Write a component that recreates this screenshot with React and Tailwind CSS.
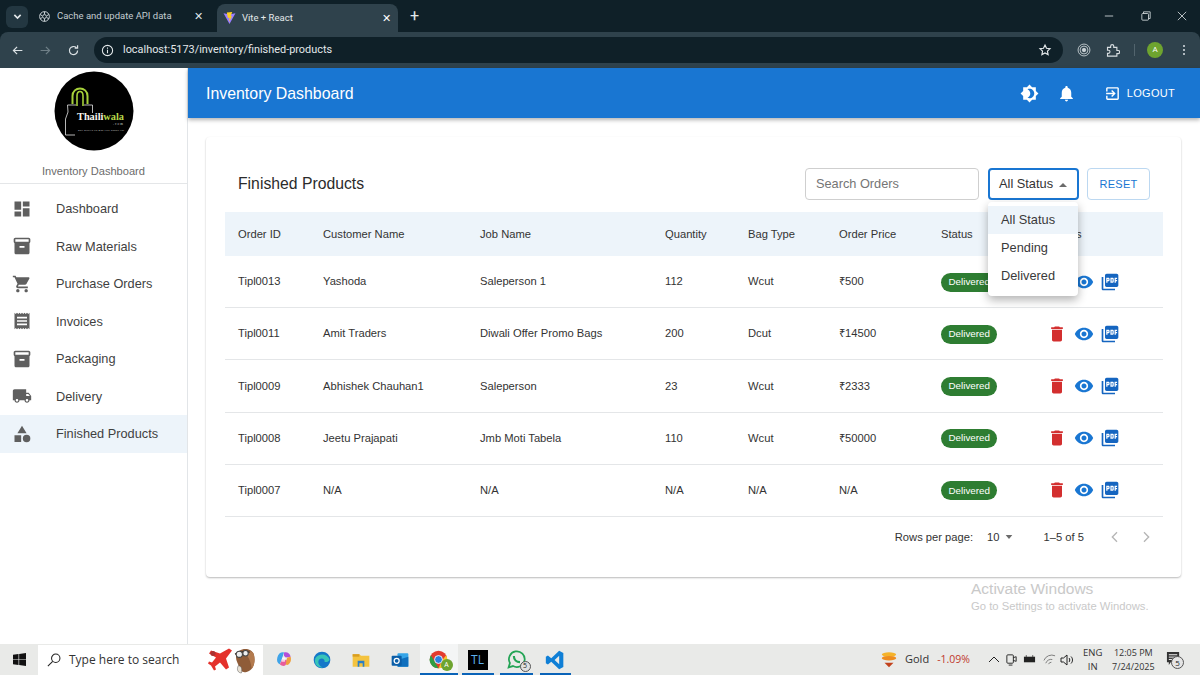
const P = ({ d, className, vb = "0 0 24 24" }) => (
  <svg viewBox={vb} className={className} fill="currentColor"><path d={d} /></svg>
);
const I = {
  dash: "M3 13h8V3H3v10zm0 8h8v-6H3v6zm10 0h8V11h-8v10zm0-18v6h8V3h-8z",
  box: "M20 2H4c-1 0-2 .9-2 2v3.01c0 .72.43 1.34 1 1.69V20c0 1.1 1.1 2 2 2h14c.9 0 2-.9 2-2V8.7c.57-.35 1-.97 1-1.69V4c0-1.1-1-2-2-2zm-5 12H9v-2h6v2zm5-7H4V4l16-.02V7z",
  cart: "M7 18c-1.1 0-1.99.9-1.99 2S5.9 22 7 22s2-.9 2-2-.9-2-2-2zM1 2v2h2l3.6 7.59-1.35 2.45c-.16.28-.25.61-.25.96 0 1.1.9 2 2 2h12v-2H7.42c-.14 0-.25-.11-.25-.25l.03-.12.9-1.63h7.45c.75 0 1.41-.41 1.75-1.03l3.58-6.49c.08-.14.12-.31.12-.48 0-.55-.45-1-1-1H5.21l-.94-2H1zm16 16c-1.1 0-1.99.9-1.99 2s.89 2 1.99 2 2-.9 2-2-.9-2-2-2z",
  receipt: "M18 17H6v-2h12v2zm0-4H6v-2h12v2zm0-4H6V7h12v2zM3 22l1.5-1.5L6 22l1.5-1.5L9 22l1.5-1.5L12 22l1.5-1.5L15 22l1.5-1.5L18 22l1.5-1.5L21 22V2l-1.5 1.5L18 2l-1.5 1.5L15 2l-1.5 1.5L12 2l-1.5 1.5L9 2 7.5 3.5 6 2 4.5 3.5 3 2v20z",
  truck: "M20 8h-3V4H3c-1.1 0-2 .9-2 2v11h2c0 1.66 1.34 3 3 3s3-1.34 3-3h6c0 1.66 1.34 3 3 3s3-1.34 3-3h2v-5l-3-4zM6 18.5c-.83 0-1.5-.67-1.5-1.5s.67-1.5 1.5-1.5 1.5.67 1.5 1.5-.67 1.5-1.5 1.5zm13.5-9 1.96 2.5H17V9.5h2.5zm-1.5 9c-.83 0-1.5-.67-1.5-1.5s.67-1.5 1.5-1.5 1.5.67 1.5 1.5-.67 1.5-1.5 1.5z",
  cat: "M12 2l-5.5 9h11zM17.5 13a4.5 4.5 0 1 0 0 9 4.5 4.5 0 0 0 0-9zM3 13.5h8v8H3z",
  bright: "M20 8.69V4h-4.69L12 .69 8.69 4H4v4.69L.69 12 4 15.31V20h4.69L12 23.31 15.31 20H20v-4.69L23.31 12 20 8.69zM12 18c-.89 0-1.74-.2-2.5-.55C11.56 16.5 13 14.42 13 12s-1.44-4.5-3.5-5.45C10.26 6.2 11.11 6 12 6c3.31 0 6 2.69 6 6s-2.69 6-6 6z",
  bell: "M12 22c1.1 0 2-.9 2-2h-4c0 1.1.89 2 2 2zm6-6v-5c0-3.07-1.64-5.64-4.5-6.32V4c0-.83-.67-1.5-1.5-1.5s-1.5.67-1.5 1.5v.68C7.63 5.36 6 7.92 6 11v5l-2 2v1h16v-1l-2-2z",
  exit: "M10.09 15.59 11.5 17l5-5-5-5-1.41 1.41L12.67 11H3v2h9.67l-2.58 2.59zM19 3H5c-1.11 0-2 .9-2 2v4h2V5h14v14H5v-4H3v4c0 1.1.89 2 2 2h14c1.1 0 2-.9 2-2V5c0-1.1-.9-2-2-2z",
  del: "M6 19c0 1.1.9 2 2 2h8c1.1 0 2-.9 2-2V7H6v12zM19 4h-3.5l-1-1h-5l-1 1H5v2h14V4z",
  eye: "M12 4.5C7 4.5 2.73 7.61 1 12c1.73 4.39 6 7.5 11 7.5s9.27-3.11 11-7.5c-1.73-4.39-6-7.5-11-7.5zM12 17c-2.76 0-5-2.24-5-5s2.24-5 5-5 5 2.24 5 5-2.24 5-5 5zm0-8c-1.66 0-3 1.34-3 3s1.34 3 3 3 3-1.34 3-3-1.34-3-3-3z",
  pdf: "M20 2H8c-1.1 0-2 .9-2 2v12c0 1.1.9 2 2 2h12c1.1 0 2-.9 2-2V4c0-1.1-.9-2-2-2zm-8.5 7.5c0 .83-.67 1.5-1.5 1.5H9v2H7.5V7H10c.83 0 1.5.67 1.5 1.5v1zm5 2c0 .83-.67 1.5-1.5 1.5h-2.5V7H15c.83 0 1.5.67 1.5 1.5v3zm4-3H19v1h1.5V11H19v2h-1.5V7h3v1.5zM9 9.5h1v-1H9v1zM4 6H2v14c0 1.1.9 2 2 2h14v-2H4V6zm10 5.5h1v-3h-1v3z",
};
const nav = [["dash","Dashboard"],["box","Raw Materials"],["cart","Purchase Orders"],["receipt","Invoices"],["box","Packaging"],["truck","Delivery"],["cat","Finished Products"]];
const rows = [
  ["Tipl0013","Yashoda","Saleperson 1","112","Wcut","₹500"],
  ["Tipl0011","Amit Traders","Diwali Offer Promo Bags","200","Dcut","₹14500"],
  ["Tipl0009","Abhishek Chauhan1","Saleperson","23","Wcut","₹2333"],
  ["Tipl0008","Jeetu Prajapati","Jmb Moti Tabela","110","Wcut","₹50000"],
  ["Tipl0007","N/A","N/A","N/A","N/A","N/A"],
];
const cols = "grid grid-cols-[85px_157px_185px_83px_91px_102px_99px_1fr] items-center pl-[13px]";

function Chrome() {
  return (
    <div className="h-[68px] bg-[#0f2028] text-[#d6dde0] flex flex-col shrink-0" style={{ fontFamily: "Roboto, sans-serif" }}>
      <div className="h-[32px] flex items-center relative pl-[5px]">
        <div className="w-[22px] h-[22px] mt-[1px] ml-[1px] rounded-md bg-[#233741] flex items-center justify-center">
          <svg viewBox="0 0 10 10" className="w-[9px] h-[9px]" fill="none" stroke="#e3e8ea" strokeWidth="1.8"><path d="M1.5 3.2 5 6.8l3.5-3.6" /></svg>
        </div>
        <div className="w-[189px] flex items-center pl-[10px] text-[9.5px] text-[#c3ccd0] mt-[1px]">
          <svg viewBox="0 0 24 24" className="w-[13px] h-[13px] mr-[6px]" fill="none" stroke="#c9d1d5" strokeWidth="1.8"><circle cx="12" cy="12" r="9" /><circle cx="12" cy="12" r="3.5" /><path d="M12 3v5M4 8l4 3M4 16l4-2M12 21v-5M20 16l-4-2M20 8l-4 3" /></svg>
          <span className="flex-1">Cache and update API data</span>
          <span className="text-[11px] mr-[14px] text-[#dfe5e8] leading-none">✕</span>
        </div>
        <div className="w-[181px] h-[28px] mt-[4px] rounded-t-lg bg-[#2f424c] flex items-center pl-[6px] text-[9.5px] text-[#e3e8ea]">
          <svg viewBox="0 0 24 24" className="w-[13px] h-[14px] mr-[6px]"><path d="M1 3l11 20L23 3l-7 1.5h-8z" fill="#9a7dff" /><path d="M7 2l10-1-3 8 3-.5-6 11 1-8-3 .5z" fill="#ffcf20" /></svg>
          <span className="flex-1">Vite + React</span>
          <span className="text-[11px] mr-[7px] text-white leading-none">✕</span>
        </div>
        <span className="ml-[12px] text-[#e3e8ea] text-[16px] leading-none">+</span>
        <div className="ml-auto flex items-center text-[#d8dee1]">
          <svg viewBox="0 0 12 12" className="w-[10px] h-[10px] mr-[27px]" stroke="currentColor" fill="none"><path d="M1 6h10" /></svg>
          <svg viewBox="0 0 12 12" className="w-[10px] h-[10px] mr-[26px]" stroke="currentColor" fill="none"><rect x="1" y="3" width="8" height="8" rx="1" /><path d="M3 3V1h8v8H9" /></svg>
          <svg viewBox="0 0 12 12" className="w-[10px] h-[10px] mr-[13px]" stroke="currentColor" fill="none"><path d="M1 1l10 10M11 1 1 11" /></svg>
        </div>
      </div>
      <div className="h-[36px] bg-[#2f424c] rounded-t-[8px] flex items-center pl-[11px] pr-[15px]">
        <svg viewBox="0 0 16 16" className="w-[13px] h-[13px] text-[#dbe1e4]" fill="none" stroke="currentColor" strokeWidth="1.5"><path d="M14 8H3M7.5 3.5 3 8l4.5 4.500" /></svg>
        <svg viewBox="0 0 16 16" className="w-[13px] h-[13px] ml-[15px] text-[#6f7f87]" fill="none" stroke="currentColor" strokeWidth="1.5"><path d="M2 8h11M8.5 3.500 13 8l-4.500 4.500" /></svg>
        <svg viewBox="0 0 16 16" className="w-[13px] h-[13px] ml-[15px] text-[#dbe1e4]" fill="none" stroke="currentColor" strokeWidth="1.5"><path d="M13 8a5 5 0 1 1-1.500-3.500M13 1.500V5H9.500" /></svg>
        <div className="ml-[14px] flex-1 h-[26px] rounded-full bg-[#0f2028] flex items-center pl-[7px] text-[10.9px] text-[#e3e8ea]">
          <svg viewBox="0 0 16 16" className="w-[13px] h-[13px] mr-[9px]" fill="none" stroke="#e3e8ea" strokeWidth="1.3"><circle cx="8" cy="8" r="6.3" /><path d="M8 7v4.300M8 4.400v1.300" /></svg>
          <span>localhost:5173/inventory/finished-products</span>
          <svg viewBox="0 0 24 24" className="w-[14px] h-[14px] ml-auto mr-[11px]" fill="none" stroke="#e3e8ea" strokeWidth="2"><path d="M12 3.500l2.600 5.500 6 .8-4.400 4.100 1.100 6-5.300-2.900-5.300 2.900 1.100-6-4.400-4.100 6-.8z" /></svg>
        </div>
        <svg viewBox="0 0 16 16" className="w-[14px] h-[14px] ml-[14px]" fill="none" stroke="#c9d1d5"><circle cx="8" cy="8" r="6.8" /><circle cx="8" cy="8" r="4.500" /><circle cx="8" cy="8" r="2" fill="#c9d1d5" /></svg>
        <svg viewBox="0 0 24 24" className="w-[15px] h-[15px] ml-[14px]" fill="none" stroke="#d8dee1" strokeWidth="1.8"><path d="M4 7h5V5a2.500 2.500 0 0 1 5 0v2h5v5h2a2.500 2.500 0 0 1 0 5h-2v4H4v-4.500h1.500a2.500 2.500 0 0 0 0-5H4z" /></svg>
        <div className="w-px h-[12px] bg-[#52646d] ml-[14px]" />
        <div className="w-[16px] h-[16px] rounded-full bg-[#6ea42f] ml-[12px] flex items-center justify-center text-[8px] text-white">A</div>
        <div className="flex flex-col gap-[2px] ml-[20px]">
          <i className="w-[2px] h-[2px] bg-[#dbe1e4] rounded-full" /><i className="w-[2px] h-[2px] bg-[#dbe1e4] rounded-full" /><i className="w-[2px] h-[2px] bg-[#dbe1e4] rounded-full" />
        </div>
      </div>
    </div>
  );
}

function Sidebar() {
  return (
    <aside className="w-[188px] shrink-0 border-r border-[#e2e5e8] bg-white flex flex-col">
      <div className="h-[116px] flex flex-col items-center border-b border-[#e4e6e8]">
        <svg viewBox="0 0 80 80" className="w-[80px] h-[80px] mt-[3px]">
          <circle cx="40" cy="40" r="39.5" fill="#000" />
          <path d="M22 34H13.500L14 41 11.500 48V64H21" fill="none" stroke="#e4e4e4" strokeWidth="0.8" />
          <path d="M30 34H38.500V42" fill="none" stroke="#e4e4e4" strokeWidth="0.8" />
          <path d="M18.500 33V25C18.500 15 33.500 15 33.500 25V33" fill="none" stroke="#a6d13a" strokeWidth="2" />
          <path d="M23 35V25C23 19 29 19 29 25V35" fill="none" stroke="#a6d13a" strokeWidth="1.6" />
          <text x="23" y="49" fill="#f6f6f0" fontSize="9.500" fontWeight="700" textLength="47" lengthAdjust="spacingAndGlyphs" fontFamily="'Liberation Serif', serif">Thaili<tspan fill="#b6d84a">wala</tspan></text>
          <text x="59" y="54" fill="#d8d8d8" fontSize="3.400" textLength="10" fontFamily="'Liberation Serif', serif">.com</text>
          <text x="24" y="60" fill="#c8c8c8" fontSize="2.300" textLength="46" fontFamily="'Liberation Sans', sans-serif">Sari Duniya Ka Bah Hun Chhan Hai</text>
        </svg>
        <div className="mt-[12px] text-[11.1px] text-[#6b6b6b] leading-[16px]">Inventory Dashboard</div>
      </div>
      <nav className="pt-[6px]">
        {nav.map(([ic, label]) => (
          <div key={label} className={`h-[37.5px] flex items-center pl-[12px] text-[#3f3f3f] text-[12.75px] ${label === "Finished Products" ? "bg-[#edf4fa]" : ""}`}>
            <P d={I[ic]} className="w-[20px] h-[20px] text-[#5f5f5f] shrink-0" />
            <span className="ml-[24px]">{label}</span>
          </div>
        ))}
      </nav>
    </aside>
  );
}

function Main() {
  return (
    <main className="flex-1 bg-white flex flex-col relative min-w-0">
      <header className="h-[50px] bg-[#1976d2] text-white flex items-center pl-[18px] pr-[25px] shadow-[0_2px_4px_rgba(0,0,0,0.3)] shrink-0">
        <span className="text-[15.9px] mt-[1px]">Inventory Dashboard</span>
        <P d={I.bright} className="w-[19px] h-[19px] ml-auto" />
        <P d={I.bell} className="w-[19px] h-[19px] ml-[18px]" />
        <P d={I.exit} className="w-[17px] h-[17px] ml-[28px]" />
        <span className="text-[11px] ml-[5.5px] tracking-[0.3px]">LOGOUT</span>
      </header>
      <section className="ml-[18px] mr-[19px] mt-[19px] h-[440px] rounded bg-white shadow-[0_1px_2px_rgba(0,0,0,0.28)] pl-[19px] pr-[18px] flex flex-col relative">
        <div className="h-[75px] flex items-center shrink-0 pl-[13px] pr-[13px]">
          <h1 className="text-[15.75px] text-[#2b2b2b] font-normal mt-[19px]">Finished Products</h1>
          <div className="ml-auto flex items-center mt-[19px]">
            <div className="w-[174px] h-[32px] border border-[#cfcfcf] rounded flex items-center pl-[10px] text-[12.75px] text-[#757575]">Search Orders</div>
            <div className="w-[91px] h-[32px] ml-[9px] border-2 border-[#1976d2] rounded flex items-center pl-[9px] text-[12.8px] text-[#333]">
              All Status
              <svg viewBox="0 0 10 6" className="w-[8px] h-[5px] ml-[6px] text-[#6b6b6b]" fill="currentColor"><path d="M0 6l5-5 5 5z" /></svg>
            </div>
            <div className="w-[63px] h-[32px] ml-[8px] border border-[#bcd8f1] rounded flex items-center justify-center text-[11px] tracking-[0.3px] text-[#1976d2]">RESET</div>
          </div>
        </div>
        <div className={`${cols} h-[44px] bg-[#edf4fa] text-[11.2px] text-[#333] shrink-0`}>
          {["Order ID","Customer Name","Job Name","Quantity","Bag Type","Order Price","Status"].map((h) => <div key={h}>{h}</div>)}
          <div className="pl-[5px]">Actions</div>
        </div>
        {rows.map((r) => (
          <div key={r[0]} className={`${cols} h-[52.2px] border-b border-[#e4e6e8] text-[11.2px] text-[#333] shrink-0`}>
            {r.map((c, i) => <div key={i}>{c}</div>)}
            <div className="flex items-center pt-[1px]"><span className="inline-flex items-center h-[19px] px-[7.5px] rounded-full bg-[#2e7d32] text-white text-[9.8px]">Delivered</span></div>
            <div className="flex items-center pl-[7px]">
              <P d={I.del} className="w-[20px] h-[20px] text-[#d32f2f]" />
              <P d={I.eye} className="w-[20px] h-[20px] text-[#1976d2] ml-[6.5px]" />
              <P d={I.pdf} className="w-[20px] h-[20px] text-[#1565c0] ml-[6.5px]" />
            </div>
          </div>
        ))}
        <div className="flex items-center justify-end h-[40px] text-[11.2px] text-[#333] pr-[9px]">
          <span>Rows per page:</span>
          <span className="ml-[14px]">10</span>
          <svg viewBox="0 0 10 6" className="w-[8px] h-[4px] ml-[5px] text-[#6b6b6b]" fill="currentColor"><path d="M0 0l5 6 5-6z" /></svg>
          <span className="ml-[31px]">1–5 of 5</span>
          <svg viewBox="0 0 24 24" className="w-[16px] h-[16px] ml-[23px] text-[#b5b5b5]" fill="none" stroke="currentColor" strokeWidth="2"><path d="M15 5l-7 7 7 7" /></svg>
          <svg viewBox="0 0 24 24" className="w-[16px] h-[16px] ml-[15px] text-[#b5b5b5]" fill="none" stroke="currentColor" strokeWidth="2"><path d="M9 5l7 7-7 7" /></svg>
        </div>
        <div className="absolute left-[782px] top-[65px] w-[90px] h-[94px] bg-white rounded shadow-[0_4px_10px_rgba(0,0,0,0.3)] pt-[4px] text-[12.8px] text-[#3a3a3a] z-10">
          <div className="h-[28px] pl-[13px] flex items-center bg-[#edf4fa]">All Status</div>
          <div className="h-[28px] pl-[13px] flex items-center">Pending</div>
          <div className="h-[28px] pl-[13px] flex items-center">Delivered</div>
        </div>
      </section>
      <div className="absolute left-[783px] top-[511px] text-[#c9c9c9]">
        <div className="text-[15.5px] leading-[20px]">Activate Windows</div>
        <div className="text-[11.25px] leading-[16px] -mt-[1px]">Go to Settings to activate Windows.</div>
      </div>
    </main>
  );
}

function Taskbar() {
  const underline = "absolute bottom-0 h-[2px] bg-[#0a63b8]";
  return (
    <div className="h-[31px] bg-[#e9eae8] flex items-center shrink-0 relative" style={{ fontFamily: "'Open Sans', sans-serif" }}>
      <div className="w-[38px] flex justify-center">
        <svg viewBox="0 0 16 16" className="w-[13px] h-[13px]" fill="#111"><path d="M0 2.200 6.800 1.200V7.600H0zM7.600 1.100 16 0V7.600H7.600zM0 8.400H6.800V14.800L0 13.800zM7.600 8.400H16V16L7.600 14.900z" /></svg>
      </div>
      <div className="w-[225px] h-[30px] bg-white flex items-center pl-[9px] text-[12px] text-[#333] relative">
        <svg viewBox="0 0 16 16" className="w-[14px] h-[14px]" fill="none" stroke="#222" strokeWidth="1.2"><circle cx="10" cy="6" r="4.8" /><path d="M6.500 9.500 1 15" /></svg>
        <span className="ml-[8px]">Type here to search</span>
        <svg viewBox="0 0 26 24" className="absolute left-[169px] top-[2px] w-[26px] h-[25px]"><path d="M22 1l3 2-6 8 3 9-3 2-6-7-5 4 1 3-2 1-3-5-3-2 1-2 3 1 4-5-7-4 2-3 9 3z" fill="#e4312b" /><circle cx="6" cy="6" r="2.5" fill="#a33" /></svg>
        <svg viewBox="0 0 22 26" className="absolute left-[195px] top-[2px] w-[23px] h-[27px]"><path d="M3 8C4 1 17-1 20 7c2 7 0 15-7 17-4 1-6-1-7-4C5 16 2 13 3 8z" fill="#8f5c38" /><path d="M11 5c4-2 8-1 9 2 1 5 1 10-2 14-1-6-2-11-7-16z" fill="#b37a4e" /><path d="M2 7c3-2 10-3 14-2" stroke="#3a2a20" strokeWidth="1.5" fill="none" /><circle cx="6" cy="7" r="3" fill="#eee" stroke="#444" /><circle cx="12" cy="6" r="2.600" fill="#eee" stroke="#444" /><path d="M5 18c3 0 4 3 3 7-3 0-5-3-3-7z" fill="#e9e2d6" stroke="#555" strokeWidth="0.5" /></svg>
      </div>
      <div className="flex items-center">
        <svg viewBox="0 0 24 24" className="w-[20px] h-[20px] ml-[11px]"><path d="M4 9c1-5 5-7 8-6l-2 6-3 8c-3-1-4-4-3-8z" fill="#3fa4e8" /><path d="M12 3c4-1 7 1 8 5l-6 1-2-2z" fill="#b34fd8" /><path d="M20 8c1 4 0 8-4 10l-3-1 3-8z" fill="#f0a03c" /><path d="M7 17l3-6 5 1-1 6c-2 2-5 1-7-1z" fill="#e85c9a" /><path d="M10 9h4l-1 5h-4z" fill="#fff" opacity="0.7" /></svg>
        <svg viewBox="0 0 24 24" className="w-[20px] h-[20px] ml-[18px]"><circle cx="12" cy="12" r="10" fill="#1578c9" /><path d="M4 10c3-6 14-7 17 1 0 3-4 4-6 3 1-3-3-5-6-3-3 3-1 8 4 10-6 1-11-4-9-11z" fill="#38c4b8" /></svg>
        <svg viewBox="0 0 24 24" className="w-[20px] h-[20px] ml-[19px]"><path d="M2 5h8l2 2h10v13H2z" fill="#f4c33f" /><path d="M2 5h8v3H2z" fill="#d99e22" /><path d="M8 13h8v7h-2v-4h-4v4H8z" fill="#2a7fc7" /></svg>
        <svg viewBox="0 0 24 24" className="w-[20px] h-[20px] ml-[18.5px]"><rect x="9" y="4" width="13" height="16" rx="1" fill="#35a5e8" /><path d="M9 12l13-4v12H9z" fill="#0f6fbd" /><rect x="2" y="7" width="12" height="12" rx="1" fill="#0a5ea8" /><circle cx="8" cy="13" r="3" fill="none" stroke="#fff" strokeWidth="1.5" /></svg>
        <div className="relative w-[38px] h-[31px] ml-[10px] bg-[#f4f5f5] flex items-center justify-center">
          <svg viewBox="0 0 24 24" className="w-[21px] h-[21px]"><circle cx="12" cy="12" r="10" fill="#e33b2e" /><path d="M20.7 7A10 10 0 0 1 12 22l4-9z" fill="#f7c52c" /><path d="M12 22A10 10 0 0 1 3.300 7L8 15z" fill="#2f9e44" /><circle cx="12" cy="12" r="4.500" fill="#2a7fe0" stroke="#fff" /></svg>
          <div className="absolute right-[5px] bottom-[4px] w-[12px] h-[12px] rounded-full bg-[#6ea42f] text-white text-[7px] flex items-center justify-center">A</div>
          <div className={`${underline} inset-x-0`} />
        </div>
        <div className="relative w-[32px] h-[31px] flex items-center justify-center ml-[4px]">
          <div className="w-[20px] h-[20px] bg-black flex items-center justify-center text-[#5eb0ef] text-[12px]">TL</div>
          <div className={`${underline} inset-x-0`} />
        </div>
        <div className="relative w-[33px] h-[31px] flex items-center justify-center ml-[6px]">
          <svg viewBox="0 0 24 24" className="w-[21px] h-[21px]" fill="none" stroke="#23a455" strokeWidth="2"><path d="M3 21l1.5-5A9 9 0 1 1 8 19.500z" /><path d="M9 8c0 4 3 7 7 7" strokeWidth="2.5" /></svg>
          <div className="absolute right-[2px] bottom-[3px] w-[11px] h-[11px] rounded-full bg-[#e0e0e0] border border-[#555] text-[#222] text-[7px] flex items-center justify-center">5</div>
          <div className={`${underline} inset-x-0`} />
        </div>
        <div className="relative w-[31px] h-[31px] flex items-center justify-center ml-[7px]">
          <svg viewBox="0 0 24 24" className="w-[20px] h-[20px]"><path d="M17 1l5 2.500v17L17 23 7.500 14l-4 3.500L1 16V8l2.500-1.500 4 3.500zM17 7l-5.500 5 5.500 5z" fill="#0f7fd6" /></svg>
          <div className={`${underline} inset-x-0`} />
        </div>
      </div>
      <div className="absolute left-[880px] top-0 h-full flex items-center">
        <svg viewBox="0 0 20 20" className="w-[18px] h-[20px]"><ellipse cx="10" cy="4" rx="8" ry="2.500" fill="#f5b32a" /><ellipse cx="10" cy="8" rx="8" ry="2.500" fill="#ee8c1e" /><path d="M5 13h10l-5 5z" fill="#c2421c" /></svg>
        <span className="ml-[7px] text-[11px] text-[#333]">Gold</span>
        <span className="ml-[8px] text-[10.5px] text-[#c0392b]">-1.09%</span>
      </div>
      <div className="absolute left-[988px] top-0 h-full flex items-center text-[#222]">
        <svg viewBox="0 0 12 12" className="w-[12px] h-[12px]" fill="none" stroke="currentColor"><path d="M1 8l5-5 5 5" /></svg>
        <svg viewBox="0 0 14 14" className="w-[13px] h-[13px] ml-[5px]" fill="none" stroke="currentColor"><rect x="2" y="2" width="7" height="9" rx="1" /><path d="M9 5l3-1v5l-3-1M4 13h4" /></svg>
        <svg viewBox="0 0 14 14" className="w-[13px] h-[13px] ml-[5px]" fill="currentColor"><rect x="1" y="4" width="12" height="6" /><rect x="3" y="2.500" width="1" height="1.500" /><rect x="10" y="2.500" width="1" height="1.500" /></svg>
        <svg viewBox="0 0 14 14" className="w-[13px] h-[13px] ml-[7px]" fill="none" stroke="#777"><path d="M1 8a9 9 0 0 1 12-5M3 11a6 6 0 0 1 7-4M6 12a3 3 0 0 1 3-2" /></svg>
        <svg viewBox="0 0 14 14" className="w-[14px] h-[14px] ml-[4px]" fill="none" stroke="currentColor"><path d="M1 5h2.500L7 2v10L3.500 9H1zM9 5c1 1 1 3 0 4M11 3.500c2 2 2 5 0 7" /></svg>
      </div>
      <div className="absolute left-[1083px] top-0 h-full flex flex-col justify-center items-center text-[9.5px] leading-[14px] text-[#333]"><span>ENG</span><span>IN</span></div>
      <div className="absolute left-[1112px] top-0 h-full flex flex-col justify-center items-center text-[9px] leading-[14px] text-[#333]"><span>12:05 PM</span><span>7/24/2025</span></div>
      <div className="absolute left-[1166px] top-[7px]">
        <svg viewBox="0 0 16 16" className="w-[15px] h-[15px]" fill="#333"><path d="M1 1h13v11H5l-2 3v-3H1z" /><path d="M3 4h9M3 6.500h9M3 9h6" stroke="#fff" /></svg>
        <div className="absolute left-[5px] top-[5px] w-[13px] h-[13px] rounded-full bg-[#e5e5e5] border border-[#555] text-[#222] text-[8px] flex items-center justify-center">5</div>
      </div>
    </div>
  );
}

export default function App() {
  return (
    <div className="w-[1200px] h-[675px] flex flex-col overflow-hidden bg-white" style={{ fontFamily: "'Liberation Sans', Arial, sans-serif" }}>
      <Chrome />
      <div className="flex-1 flex min-h-0">
        <Sidebar />
        <Main />
      </div>
      <Taskbar />
    </div>
  );
}
